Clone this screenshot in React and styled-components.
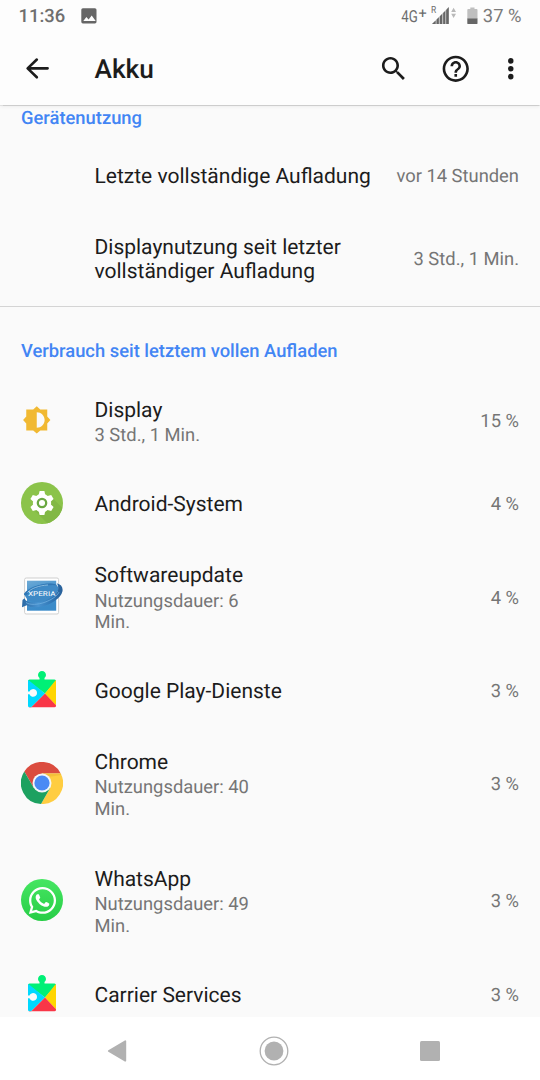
import React from 'react';
import styled, { createGlobalStyle } from 'styled-components';
import { FaWhatsapp } from 'react-icons/fa';

//status bar icons
const ImageIcon = () => (
  <svg width="16" height="16" viewBox="0 0 16 16">
    <rect x="0.3" y="0.2" width="15.2" height="15.2" rx="1.6" fill="#666" />
    <path d="M2.3 12.9l3.1-4 2.2 2.6 3.1-4 4 5.4z" fill="#fdfdfd" />
  </svg>
);

const SignalIcon = () => (
  <svg width="56" height="20" viewBox="0 0 56 20">
    <g fontFamily="Roboto, sans-serif" fill="#6c6c6c">
      <text transform="translate(0.3 15.5) scale(0.8 1)" fontSize="16.6">
        4G
      </text>
      <text x="17.6" y="12.4" fontSize="14.5">
        +
      </text>
      <text transform="translate(30 7.4) scale(0.86 1)" fontSize="9.8">
        R
      </text>
    </g>
    <g transform="translate(0 -1.1)">
      <path d="M31.2 19.2L47.4 2.4v16.8z" fill="#c4c4c4" />
      <path
        d="M31 19.2l3.6-3.6v3.6zM35.6 14.6l2.2-2.2v6.8h-2.2zM38.9 11.4l2.2-2.2v10h-2.2zM42.2 8.1l2-2.1v13.2h-2zM45.2 5l2.6-2.8v17h-2.6z"
        fill="#666"
      />
      <path d="M52.6 2.8l2.4 4.3h-4.8zM52.6 13l2.4-4.2h-4.8z" fill="#b9b9b9" />
    </g>
  </svg>
);

const BatteryIcon = () => (
  <svg width="11" height="18" viewBox="0 0 11 18">
    <path d="M3.3 0.4h4.2v1.7h2.1q.9 0 .9.9v9H.3V3q0-.9.9-.9h2.1z" fill="#bfbfbf" />
    <path d="M.3 11.6h10.2v4.6q0 .9-.9.9H1.2q-.9 0-.9-.9z" fill="#666" />
  </svg>
);

//toolbar icons
const BackIcon = () => (
  <svg width="31.5" height="31.5" viewBox="0 0 24 24">
    <path
      d="M19.5 11.7H4.8M11.3 5L4.3 11.7l7 6.8"
      fill="none"
      stroke="#1c1c1c"
      strokeWidth="2"
      strokeLinecap="round"
      strokeLinejoin="round"
    />
  </svg>
);

const SearchIcon = () => (
  <svg width="31.5" height="31.5" viewBox="0 0 24 24" fill="#1c1c1c">
    <path d="M15.5 14h-.79l-.28-.27C15.41 12.59 16 11.11 16 9.5 16 5.91 13.09 3 9.5 3S3 5.91 3 9.5 5.91 16 9.5 16c1.61 0 3.09-.59 4.23-1.57l.27.28v.79l5 4.99L20.49 19l-4.99-5zm-6 0C7.01 14 5 11.99 5 9.5S7.01 5 9.5 5 14 7.01 14 9.5 11.99 14 9.5 14z" />
  </svg>
);

const HelpIcon = () => (
  <svg width="31.5" height="31.5" viewBox="0 0 24 24" fill="#1c1c1c">
    <path d="M11 18h2v-2h-2v2zm1-16C6.48 2 2 6.48 2 12s4.48 10 10 10 10-4.48 10-10S17.52 2 12 2zm0 18c-4.41 0-8-3.59-8-8s3.59-8 8-8 8 3.59 8 8-3.59 8-8 8zm0-14c-2.21 0-4 1.79-4 4h2c0-1.1.9-2 2-2s2 .9 2 2c0 2-3 1.75-3 5h2c0-2.25 3-2.5 3-5 0-2.21-1.79-4-4-4z" />
  </svg>
);

const MoreIcon = () => (
  <svg width="31.5" height="31.5" viewBox="0 0 24 24" fill="#1c1c1c">
    <circle cx="12" cy="6" r="2.1" />
    <circle cx="12" cy="12" r="2.1" />
    <circle cx="12" cy="18" r="2.1" />
  </svg>
);

//app icons
const DisplayIcon = () => (
  <svg width="31.5" height="31.5" viewBox="0 0 24 24">
    <path
      fill="#f1b932"
      fillRule="evenodd"
      d="M20 3.4v5.3l2.4 2.7-2.4 2.7v5.3h-5.3L12 21.8l-2.7-2.4H4v-5.3l-2.4-2.7L4 8.7V3.4h5.3L12 1l2.7 2.4zM12 5.5v11.8c3.4 0 6-2.6 6-5.9s-2.6-5.9-6-5.9z"
    />
  </svg>
);

const SystemIcon = () => (
  <svg width="42" height="42" viewBox="0 0 42 42">
    <defs>
      <clipPath id="system-clip">
        <circle cx="21" cy="21" r="21" />
      </clipPath>
    </defs>
    <circle cx="21" cy="21" r="21" fill="#8bc34a" />
    <path d="M31.5 16l14 14-12 16H31L14 29z" fill="#82b845" clipPath="url(#system-clip)" />
    <g fill="#fff">
      <circle cx="21" cy="21" r="9.2" />
      {[0, 60, 120].map((angle) => (
        <path
          key={angle}
          d="M18.6 9h4.8l1 4.6v14.8l-1 4.6h-4.8l-1-4.6V13.6z"
          transform={`rotate(${angle} 21 21)`}
        />
      ))}
    </g>
    <circle cx="21" cy="21" r="4.2" fill="#fff" stroke="#6aa842" strokeWidth="2.3" />
  </svg>
);

const UpdateIcon = () => (
  <svg width="42" height="42" viewBox="0 0 42 42">
    <defs>
      <linearGradient id="update-back" x1="0" y1="0" x2="0.3" y2="1">
        <stop offset="0" stopColor="#6fabd6" />
        <stop offset="0.45" stopColor="#4793cd" />
        <stop offset="1" stopColor="#3b8bc9" />
      </linearGradient>
      <linearGradient id="update-ring" x1="0" y1="0" x2="1" y2="0">
        <stop offset="0" stopColor="#2a68a3" />
        <stop offset="0.4" stopColor="#4993d0" />
        <stop offset="0.75" stopColor="#2f75b4" />
        <stop offset="1" stopColor="#285f98" />
      </linearGradient>
    </defs>
    <rect x="3.6" y="2" width="34" height="36" rx="1.6" fill="#fff" stroke="#cfcfcf" strokeWidth="1" />
    <rect x="6" y="4.7" width="29.2" height="30" fill="url(#update-back)" />
    <path
      d="M2.8 18C7 12 17 8 28 7.6c5-.2 9 1.4 9.5 5-.5 6-8 11-17 12.8-7 1.3-13 .6-14.5-2.4z"
      fill="#3f8ac6"
    />
    <path
      d="M2.8 18.5C7 12 18 8 29 7.5c4 0 6.5.7 7.5 2.2-3-1-8-.9-13.5.3-8.5 1.8-14.5 5-17.5 9.3z"
      fill="#3277b4"
    />
    <path d="M6.5 16.5C10 12.5 18 9.5 27 9" fill="none" stroke="#9bcbea" strokeWidth="0.8" />
    <path
      d="M35.7 7.3c4.5 1 6.6 4 5.7 8.2-1.5 6.5-10.5 12.8-21 15-5.8 1.2-11.7.8-14.6-1.2L1 31.2l.5-7.2 2-1.8c1.5 4.5 9 5.5 17.5 3.3 8.5-2.3 15-7 16-11.5.6-3-.1-5-1.3-6.7z"
      fill="url(#update-ring)"
    />
    <path d="M5 26.5c4 2.8 12 2.2 19-.3 7-2.6 12-6.2 14-10" fill="none" stroke="#6eaedf" strokeWidth="0.8" />
    <text
      x="7"
      y="20.4"
      fontFamily="Roboto, sans-serif"
      fontSize="6.6"
      fill="#fff"
      textLength="27.5"
      lengthAdjust="spacingAndGlyphs"
    >
      XPERIA
    </text>
  </svg>
);

const PlayIcon = () => (
  <svg width="42" height="42" viewBox="0 0 42 42">
    <path
      d="M7 12q0-1.5 1.5-1.5h10V9a4 4 0 1 1 5 0v1.5h10q1.5 0 1.5 1.5L24 24.5z"
      fill="#00f076"
    />
    <path
      d="M7.4 11L24 24.5 10.2 38.2H8.5Q7 38.2 7 36.7V25.3h1.5a3.9 3.9 0 1 0 0-2.8H7V12z"
      fill="#00d9ff"
    />
    <path d="M34.6 11.2Q35 11.5 35 12v24.5L24 24.5z" fill="#ffd500" />
    <path d="M24 24.5l11 11.7v.5q0 1.5-1.5 1.5H8.5q-.4 0-.8-.2L10.5 38z" fill="#f93647" />
  </svg>
);

const ChromeIcon = () => (
  <svg width="42" height="42" viewBox="0 0 42 42">
    <path d="M3.3 9.6A21 21 0 0 1 39.7 11.4H21L12.7 25.8z" fill="#db4c3f" />
    <path d="M39.7 11.4A21 21 0 0 1 20 42L29.3 25.8 21 11.4z" fill="#ffcd41" />
    <path d="M20 42A21 21 0 0 1 3.3 9.6L12.7 25.8h16.6z" fill="#1da160" />
    <path d="M21 11.4h18.7l.7 1.7L27 15z" fill="#e9b232" opacity="0.5" />
    <circle cx="21" cy="21" r="9.5" fill="#f4f6f8" />
    <circle cx="21" cy="21" r="7.6" fill="#4a8af4" />
  </svg>
);

const WhatsAppIcon = () => (
  <WhatsAppBadge>
    <FaWhatsapp size={31} />
  </WhatsAppBadge>
);

const usage = [
  { name: 'Display', time: '3 Std., 1 Min.', percent: '15 %', icon: DisplayIcon, height: 95.4 },
  { name: 'Android-System', percent: '4 %', icon: SystemIcon, height: 70 },
  { name: 'Softwareupdate', time: 'Nutzungsdauer: 6 Min.', percent: '4 %', icon: UpdateIcon, height: 116.9 },
  { name: 'Google Play-Dienste', percent: '3 %', icon: PlayIcon, height: 70 },
  { name: 'Chrome', time: 'Nutzungsdauer: 40 Min.', percent: '3 %', icon: ChromeIcon, height: 116.9 },
  { name: 'WhatsApp', time: 'Nutzungsdauer: 49 Min.', percent: '3 %', icon: WhatsAppIcon, height: 116.9 },
  { name: 'Carrier Services', percent: '3 %', icon: PlayIcon, height: 70 },
];

const App = () => {
  return (
    <Screen>
      <GlobalStyle />
      <StatusBar>
        <Clock>11:36</Clock>
        <ImageIcon />
        <StatusRight>
          <SignalIcon />
          <BatteryIcon />
        </StatusRight>
        <BatteryLevel>37 %</BatteryLevel>
      </StatusBar>
      <Toolbar>
        <IconButton aria-label="Zurück">
          <BackIcon />
        </IconButton>
        <Title>Akku</Title>
        <Actions>
          <IconButton aria-label="Suchen">
            <SearchIcon />
          </IconButton>
          <IconButton aria-label="Hilfe">
            <HelpIcon />
          </IconButton>
          <IconButton aria-label="Mehr">
            <MoreIcon />
          </IconButton>
        </Actions>
      </Toolbar>
      <Content>
        <DeviceHeading>Gerätenutzung</DeviceHeading>
        <Row $height={70}>
          <Label $top={3}>Letzte vollständige Aufladung</Label>
          <Value $top={1}>vor 14 Stunden</Value>
        </Row>
        <Row $height={95}>
          <Label $top={3.2}>
            Displaynutzung seit letzter
            <br />
            vollständiger Aufladung
          </Label>
          <Value $top={2}>3 Std., 1 Min.</Value>
        </Row>
        <Divider />
        <UsageHeading>Verbrauch seit letztem vollen Aufladen</UsageHeading>
        {usage.map(({ name, time, percent, icon: Icon, height }) => (
          <Row key={name} $height={height}>
            <IconSlot>
              <Icon />
            </IconSlot>
            <Label $top={4.4}>
              {name}
              {time && <Summary>{time}</Summary>}
            </Label>
            <Value $top={3}>{percent}</Value>
          </Row>
        ))}
      </Content>
      <NavBar>
        <NavButton aria-label="Zurück">
          <svg width="20" height="22" viewBox="0 0 20 22">
            <path
              d="M1.8 11L18.3 1.3v19.4z"
              fill="#b1b1b1"
              stroke="#b1b1b1"
              strokeWidth="1.8"
              strokeLinejoin="round"
            />
          </svg>
        </NavButton>
        <NavButton aria-label="Startseite">
          <svg width="30" height="30" viewBox="0 0 30 30">
            <circle cx="15" cy="15" r="13.8" fill="none" stroke="#b1b1b1" strokeWidth="1.3" />
            <circle cx="15" cy="15" r="9.4" fill="#b1b1b1" />
          </svg>
        </NavButton>
        <NavButton aria-label="Übersicht">
          <Square />
        </NavButton>
      </NavBar>
    </Screen>
  );
};

export default App;

const GlobalStyle = createGlobalStyle`
  body {
    margin: 0;
    background: #fafafa;
    font-family: Roboto, sans-serif;
    text-rendering: geometricPrecision;
  }
  svg {
    display: block;
    flex-shrink: 0;
  }
`;
const Screen = styled.div`
  display: flex;
  flex-direction: column;
  width: 540px;
  height: 1080px;
  overflow: hidden;
  background: #fafafa;
`;
const StatusBar = styled.div`
  display: flex;
  align-items: center;
  flex-shrink: 0;
  height: 32px;
  box-sizing: border-box;
  padding: 0 18.5px;
  background: #fdfdfd;
  color: #6f6f6f;
  font-size: 18.4px;
  z-index: 2;
`;
const Clock = styled.span`
  width: 62.5px;
  font-weight: 500;
`;
const StatusRight = styled.div`
  display: flex;
  align-items: center;
  gap: 9.5px;
  margin-left: auto;
`;
const BatteryLevel = styled.span`
  margin-left: 5px;
  color: #7a7a7a;
`;
const Toolbar = styled.header`
  display: flex;
  align-items: center;
  flex-shrink: 0;
  height: 73px;
  box-sizing: border-box;
  padding: 0 13.2px 0 21.5px;
  background: #fdfdfd;
  box-shadow: 0 0.5px 1px rgba(0, 0, 0, 0.14), 0 1px 4px rgba(0, 0, 0, 0.08);
  z-index: 1;
`;
const IconButton = styled.button`
  display: flex;
  padding: 0;
  border: none;
  background: none;
`;
const Title = styled.h1`
  margin: 3px 0 0 41.5px;
  color: #1c1c1c;
  font-size: 26.25px;
  font-weight: 500;
`;
const Actions = styled.div`
  display: flex;
  gap: 31px;
  margin-left: auto;

  ${IconButton}:last-child {
    margin-left: -7.5px;
  }
`;
const Content = styled.main`
  flex: 1;
  min-height: 0;
  overflow: hidden;
`;
const Heading = styled.h2`
  display: flex;
  align-items: center;
  box-sizing: border-box;
  margin: 0;
  padding: 0 21px;
  color: #4285f4;
  font-size: 18.375px;
  font-weight: 500;
  line-height: 21.5px;
`;
const DeviceHeading = styled(Heading)`
  height: 36px;
  padding-bottom: 8.5px;
`;
const UsageHeading = styled(Heading)`
  height: 65.7px;
  padding-top: 23.2px;
`;
const Row = styled.div`
  display: flex;
  align-items: center;
  height: ${(props) => props.$height}px;
  box-sizing: border-box;
  padding: 0 21px 0 94.5px;
`;
const IconSlot = styled.div`
  width: 73.5px;
  margin-left: -73.5px;
`;
const Label = styled.div`
  margin-top: ${(props) => props.$top || 0}px;
  color: #1c1c1c;
  font-size: 21px;
  line-height: 24.6px;
`;
const Summary = styled.div`
  width: 170px;
  margin-top: 2px;
  color: #757575;
  font-size: 18.375px;
  line-height: 21.5px;
`;
const Value = styled.div`
  margin-left: auto;
  margin-top: ${(props) => props.$top || 0}px;
  color: #757575;
  font-size: 18.375px;
  white-space: nowrap;
`;
const Divider = styled.div`
  height: 1px;
  background: #d4d4d4;
`;
const WhatsAppBadge = styled.div`
  display: flex;
  align-items: center;
  justify-content: center;
  width: 42px;
  height: 42px;
  border-radius: 50%;
  background: linear-gradient(#46e662, #27cd46);
  color: #fff;
`;
const NavBar = styled.nav`
  display: flex;
  flex-shrink: 0;
  height: 63px;
  box-sizing: border-box;
  padding: 0 31.5px 4px 39px;
  background: #fff;
`;
const NavButton = styled.button`
  display: flex;
  flex: 1;
  align-items: center;
  justify-content: center;
  padding: 8px 0 0;
  border: none;
  background: none;
`;
const Square = styled.span`
  width: 20px;
  height: 20px;
  border-radius: 1.5px;
  background: #b1b1b1;
`;
